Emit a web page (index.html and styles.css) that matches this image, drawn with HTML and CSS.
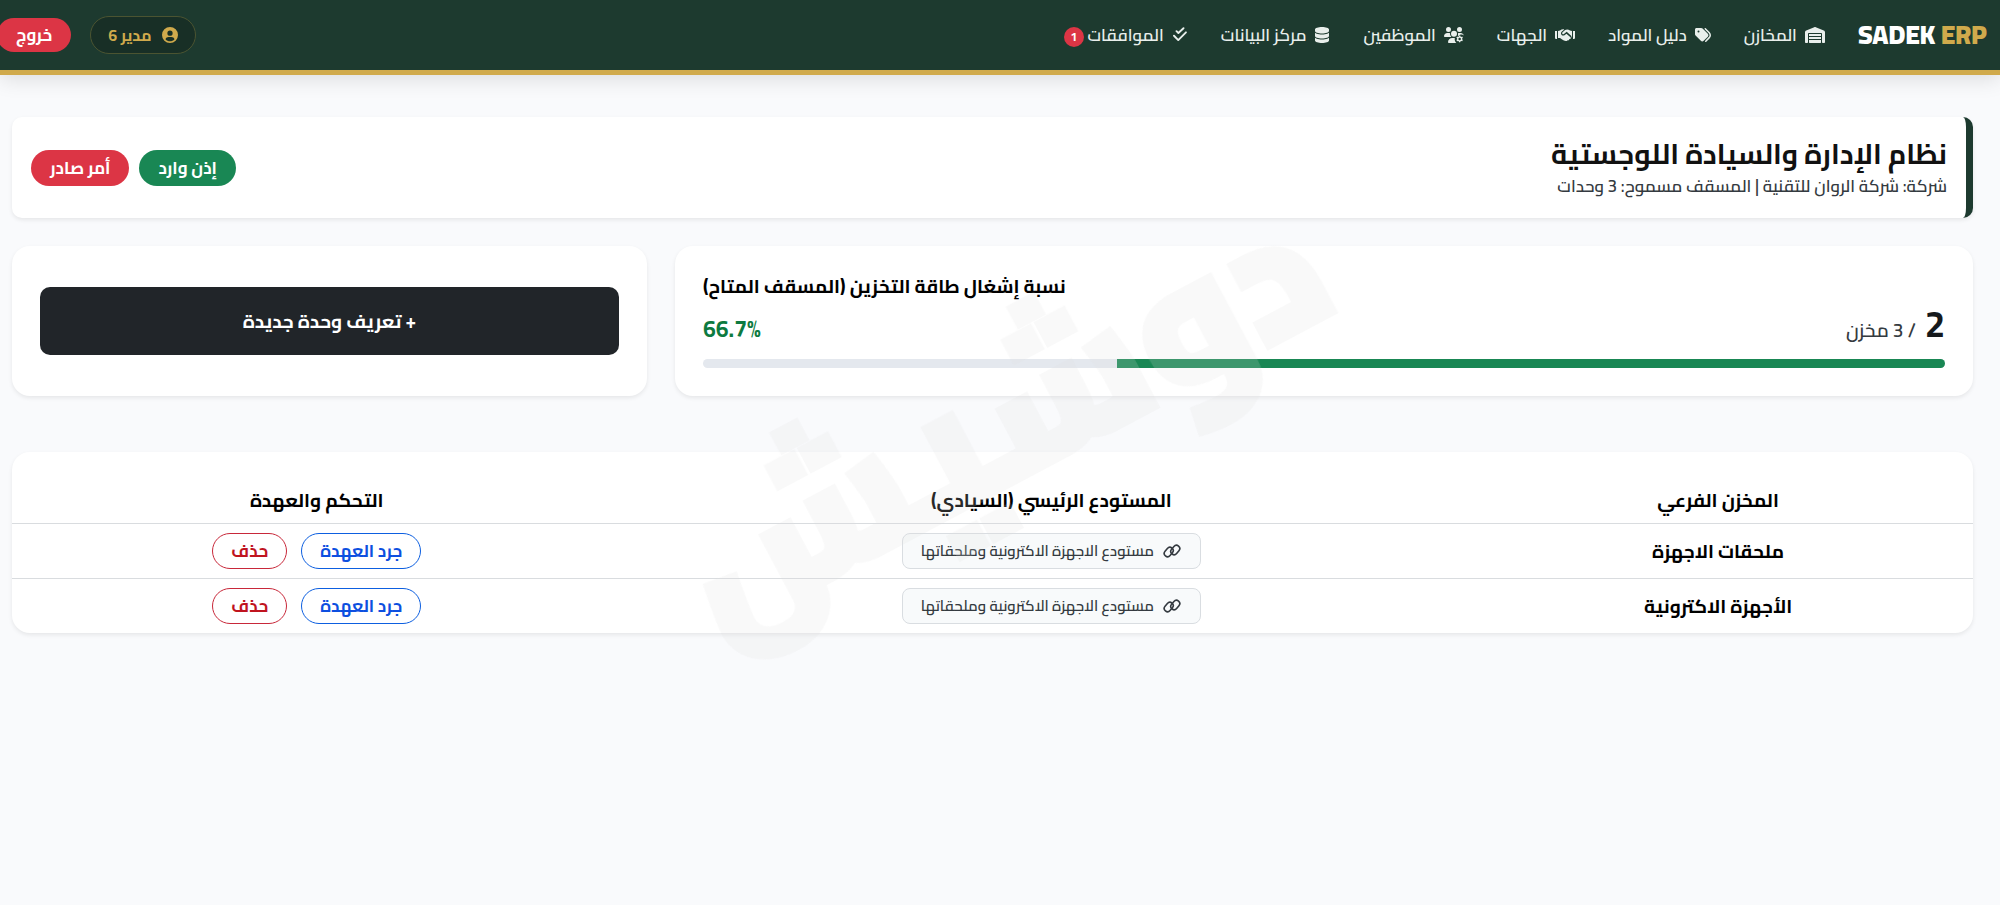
FILE: index.html
```html
<!DOCTYPE html>
<html lang="ar" dir="rtl">
<head>
  <meta charset="UTF-8">
  <meta name="viewport" content="width=device-width, initial-scale=1.0">
  <title>SADEK ERP</title>
  <link rel="stylesheet" href="styles.css">
</head>
<body>
  <svg class="sprite" aria-hidden="true">
    <symbol id="icon-warehouse" viewBox="0 0 640 512">
      <path d="M0 171V488c0 13 11 24 24 24h48c13 0 24-11 24-24V224c0-18 14-32 32-32h384c18 0 32 14 32 32v264c0 13 11 24 24 24h48c13 0 24-11 24-24V171c0-26-16-50-40-60L344 5c-15-6-32-6-48 0L40 111C16 121 0 145 0 171zM512 224H128v64h384v-64zM128 320v64h384v-64H128zM128 416v80c0 9 7 16 16 16h352c9 0 16-7 16-16v-80H128z"/>
    </symbol>
    <symbol id="icon-tags" viewBox="0 0 512 512">
      <path d="M345 39l128 129c52 52 52 136 0 188l-112 115c-9 9-25 10-34 0s-10-24 0-34l111-114c34-34 34-87 0-121L311 73c-9-9-9-25 0-34s25-10 34 0zM0 230V80c0-26 22-48 48-48h149c17 0 33 7 45 19l168 168c25 25 25 65 0 90L277 443c-25 25-65 25-90 0L19 275C7 263 0 247 0 230zm144-86a32 32 0 1 0-64 0 32 32 0 1 0 64 0z"/>
    </symbol>
    <symbol id="icon-handshake" viewBox="0 0 640 512">
      <path d="M0 128h64v256H40c-22 0-40-14-40-40V128zM576 128h64v216c0 26-18 40-40 40h-24V128z"/>
      <path d="M96 128l64-16c40-34 90-48 136-36l-76 70c-34 30-36 78-8 108 24 26 64 28 92 6l60-48 132 116c14 14 14 32 2 46-10 12-28 12-40 6 2 18-6 36-22 44-16 8-32 4-42-4-8 20-26 32-50 30-40-6-80-22-116-52L160 352H96V128z"/>
      <path d="M544 128l-64-16c-44-38-108-48-156-18l-82 74c-16 16-18 40-4 54 12 14 34 14 48 4l88-72 142 126 28 72V128z"/>
    </symbol>
    <symbol id="icon-users" viewBox="0 0 640 512">
      <path d="M144 160a80 80 0 1 0 0-160 80 80 0 1 0 0 160zM496 160a80 80 0 1 0 0-160 80 80 0 1 0 0 160zM320 312a96 96 0 1 0 0-192 96 96 0 1 0 0 192zM0 299c0-59 48-107 107-107h42c16 0 31 4 45 10a128 128 0 0 0 41 118H21c-12 0-21-9-21-21zM446 202c14-6 29-10 45-10h42c49 0 91 34 103 80-30-30-80-42-122-22-20 8-36 20-50 36l-18-4c2-28 4-54 0-80zM128 485c0-74 60-133 133-133h85c-12 60 6 120 48 160H155c-15 0-27-12-27-27z"/>
      <path fill-rule="evenodd" d="M480 272h40l8 32 22 12 32-10 22 36-24 26v24l24 26-22 36-32-10-22 12-8 34h-40l-8-34-22-12-32 10-22-36 24-26v-24l-24-26 22-36 32 10 22-12zM500 340a40 40 0 1 0 0 80 40 40 0 1 0 0-80z"/>
    </symbol>
    <symbol id="icon-database" viewBox="0 0 448 512">
      <path d="M448 80v48c0 44-100 80-224 80S0 172 0 128V80C0 36 100 0 224 0s224 36 224 80zM393 215c21-8 40-17 55-28v101c0 44-100 80-224 80S0 332 0 288V187c15 11 34 20 55 28 45 16 105 25 169 25s124-9 169-25zM0 347c15 11 34 20 55 28 45 16 105 25 169 25s124-9 169-25c21-8 40-17 55-28v85c0 44-100 80-224 80S0 476 0 432v-85z"/>
    </symbol>
    <symbol id="icon-check" viewBox="0 0 448 512">
      <path class="line" d="M112 132l60 60L336 40M32 280l136 138L414 170"/>
    </symbol>
    <symbol id="icon-user" viewBox="0 0 512 512">
      <path fill-rule="evenodd" d="M256 0a256 256 0 1 0 0 512 256 256 0 1 0 0-512zM256 112a84 84 0 1 1 0 168 84 84 0 1 1 0-168zM112 390c14-42 54-70 100-70h88c46 0 86 28 100 70-36 42-88 66-144 66s-108-24-144-66z"/>
    </symbol>
    <symbol id="icon-link" viewBox="60 36 520 440">
      <rect class="line thin" x="90" y="194" width="280" height="180" rx="90" transform="rotate(-50 230 284)"/>
      <rect class="line thin" x="270" y="138" width="280" height="180" rx="90" transform="rotate(-50 410 228)"/>
    </symbol>
  </svg>

  <header class="navbar">
    <a href="#" class="brand" dir="ltr">SADEK <span>ERP</span></a>
    <nav class="nav-menu">
      <a href="#" class="nav-item"><svg class="icon wide"><use href="#icon-warehouse"/></svg>المخازن</a>
      <a href="#" class="nav-item"><svg class="icon"><use href="#icon-tags"/></svg>دليل المواد</a>
      <a href="#" class="nav-item"><svg class="icon wide"><use href="#icon-handshake"/></svg>الجهات</a>
      <a href="#" class="nav-item"><svg class="icon wide"><use href="#icon-users"/></svg>الموظفين</a>
      <a href="#" class="nav-item"><svg class="icon"><use href="#icon-database"/></svg>مركز البيانات</a>
      <a href="#" class="nav-item"><svg class="icon"><use href="#icon-check"/></svg><span>الموافقات <span class="badge">1</span></span></a>
    </nav>
    <div class="account">
      <a href="#" class="user-chip"><svg class="icon"><use href="#icon-user"/></svg>مدير 6</a>
      <button type="button" class="btn btn-logout">خروج</button>
    </div>
  </header>

  <main class="container">
    <section class="page-head">
      <div class="head-title">
        <h1>نظام الإدارة والسيادة اللوجستية</h1>
        <p>شركة: شركة الروان للتقنية | المسقف مسموح: 3 وحدات</p>
      </div>
      <div class="head-actions">
        <button type="button" class="btn btn-success">إذن وارد</button>
        <button type="button" class="btn btn-danger">أمر صادر</button>
      </div>
    </section>

    <div class="stats">
      <section class="card usage">
        <h2>نسبة إشغال طاقة التخزين (المسقف المتاح)</h2>
        <div class="usage-row">
          <div class="usage-count"><strong>2</strong> / 3 مخزن</div>
          <span class="usage-percent" dir="ltr">66.7%</span>
        </div>
        <div class="progress"><div class="progress-bar" style="width: 66.7%"></div></div>
      </section>
      <section class="card add-card">
        <button type="button" class="btn-add">+ تعريف وحدة جديدة</button>
      </section>
    </div>

    <section class="card table-card">
      <table>
        <thead>
          <tr>
            <th>المخزن الفرعي</th>
            <th>المستودع الرئيسي (السيادي)</th>
            <th>التحكم والعهدة</th>
          </tr>
        </thead>
        <tbody>
          <tr>
            <td class="store">ملحقات الاجهزة</td>
            <td><span class="parent"><svg class="icon wide"><use href="#icon-link"/></svg>مستودع الاجهزة الاكترونية وملحقاتها</span></td>
            <td>
              <div class="row-actions">
                <button type="button" class="btn btn-outline-primary">جرد العهدة</button>
                <button type="button" class="btn btn-outline-danger">حذف</button>
              </div>
            </td>
          </tr>
          <tr>
            <td class="store">الأجهزة الاكترونية</td>
            <td><span class="parent"><svg class="icon wide"><use href="#icon-link"/></svg>مستودع الاجهزة الاكترونية وملحقاتها</span></td>
            <td>
              <div class="row-actions">
                <button type="button" class="btn btn-outline-primary">جرد العهدة</button>
                <button type="button" class="btn btn-outline-danger">حذف</button>
              </div>
            </td>
          </tr>
        </tbody>
      </table>
    </section>
  </main>

  <div class="watermark" aria-hidden="true">دوشيش</div>
</body>
</html>
```

FILE: styles.css
```css
:root {
  --primary: #1d3a2f;
  --gold: #d0aa4c;
  --success: #198754;
  --danger: #dc3545;
  --dark: #212529;
}

* {
  box-sizing: border-box;
}

body {
  margin: 0;
  min-height: 100vh;
  background: #f9fafc;
  color: #000;
  font-family: Cairo, "Noto Sans Arabic", "Noto Kufi Arabic", "Open Sans", "DejaVu Sans", sans-serif;
  font-size: 17px;
  line-height: 24px;
}

button {
  font-family: inherit;
  cursor: pointer;
}

a {
  text-decoration: none;
}

h1,
h2,
p {
  margin: 0;
}

.sprite {
  display: none;
}

.icon {
  width: 16px;
  height: 16px;
  fill: currentColor;
  flex: none;
}

.icon.wide {
  width: 20px;
}

.line {
  fill: none;
  stroke: currentColor;
  stroke-width: 60;
  stroke-linecap: round;
  stroke-linejoin: round;
}

.line.thin {
  stroke-width: 44;
}

/* header */
.navbar {
  display: flex;
  align-items: center;
  height: 75px;
  padding-right: 13px;
  background: var(--primary);
  border-bottom: 5px solid var(--gold);
  box-shadow: 0 4px 20px rgba(0, 0, 0, 0.12);
}

.brand {
  color: #fff;
  font-size: 26px;
  font-weight: 900;
}

.brand span {
  color: var(--gold);
}

.nav-menu {
  display: flex;
  gap: 33px;
  margin-right: 33px;
}

.nav-item {
  display: flex;
  align-items: center;
  gap: 8px;
  color: #e9efec;
  font-weight: 600;
  white-space: nowrap;
}

.badge {
  display: inline-block;
  width: 20px;
  height: 20px;
  border-radius: 50%;
  background: var(--danger);
  color: #fff;
  font-size: 12px;
  font-weight: 700;
  line-height: 20px;
  text-align: center;
}

.account {
  display: flex;
  align-items: center;
  gap: 19px;
  margin: 0 auto 0 -3px;
}

.user-chip {
  display: flex;
  align-items: center;
  gap: 10px;
  height: 38px;
  padding: 0 17px;
  border: 1px solid #4b5431;
  border-radius: 20px;
  background: #182f26;
  color: var(--gold);
  font-size: 16px;
  font-weight: 700;
}

.btn {
  height: 36px;
  padding: 0 18px;
  border: 1px solid transparent;
  border-radius: 18px;
  color: #fff;
  font-size: 17px;
  font-weight: 700;
  line-height: 24px;
  white-space: nowrap;
}

.btn-success {
  background: var(--success);
}

.btn-danger,
.btn-logout {
  background: var(--danger);
}

.btn-logout {
  height: 34px;
}

/* content */
.container {
  padding: 42px 27px 24px 12px;
}

.page-head {
  display: flex;
  justify-content: space-between;
  align-items: center;
  min-height: 101px;
  padding: 16px 19px;
  border-right: 7px solid var(--primary);
  border-radius: 10px;
  background: #fff;
  box-shadow: 0 2px 4px rgba(0, 0, 0, 0.08);
}

.head-title {
  padding-bottom: 4px;
}

.page-head h1 {
  color: #111;
  font-size: 28px;
  font-weight: 700;
  line-height: 40px;
}

.page-head p {
  color: #343a40;
  font-weight: 600;
}

.head-actions {
  display: flex;
  gap: 10px;
}

.stats {
  display: grid;
  grid-template-columns: minmax(0, 1298fr) minmax(0, 635fr);
  gap: 28px;
  margin: 28px 0 56px;
}

.card {
  border-radius: 18px;
  background: #fff;
  box-shadow: 0 2px 4px rgba(0, 0, 0, 0.08);
}

.usage {
  padding: 28px;
}

.usage h2 {
  font-size: 19px;
  font-weight: 700;
  line-height: 24px;
  text-align: left;
}

.usage-row {
  display: flex;
  justify-content: space-between;
  align-items: baseline;
  height: 44px;
  margin: 4px 0 13px;
  line-height: 44px;
}

.usage-count {
  color: #343a40;
  font-size: 19px;
  font-weight: 600;
}

.usage-count strong {
  margin-left: 5px;
  color: #15191c;
  font-size: 36px;
  font-weight: 700;
}

.usage-percent {
  color: #0d7a40;
  font-size: 23px;
  font-weight: 700;
}

.progress {
  height: 9px;
  border-radius: 5px;
  background: #e4e8ee;
  overflow: hidden;
}

.progress-bar {
  height: 100%;
  background: var(--success);
}

.add-card {
  display: flex;
  align-items: center;
  padding: 28px;
}

.btn-add {
  flex: 1;
  height: 68px;
  border: 0;
  border-radius: 10px;
  background: var(--dark);
  color: #fff;
  font-size: 19px;
  font-weight: 700;
}

/* table */
.table-card {
  padding-top: 25px;
}

table {
  width: 100%;
  border-collapse: collapse;
  table-layout: fixed;
}

th,
td {
  height: 55px;
  padding: 0 8px;
  font-size: 19px;
  text-align: center;
}

th {
  height: 46px;
}

th:first-child {
  width: 26%;
}

th:last-child {
  width: 32%;
}

th:last-child,
td:last-child {
  padding-right: 26px;
}

tbody tr {
  border-top: 1px solid #d9dcdf;
}

.store {
  font-weight: 700;
}

.parent {
  display: inline-flex;
  align-items: center;
  gap: 8px;
  height: 36px;
  padding: 0 18px;
  border: 1px solid #d9dde1;
  border-radius: 8px;
  background: #f8fafb;
  color: #343a40;
  font-size: 15px;
  font-weight: 600;
  vertical-align: middle;
}

.row-actions {
  display: flex;
  justify-content: center;
  gap: 14px;
}

.btn-outline-primary {
  border-color: #0d5fe0;
  background: transparent;
  color: #0d4fe0;
}

.btn-outline-danger {
  border-color: #c8283a;
  background: transparent;
  color: #c0141f;
}

/* watermark over the whole page */
.watermark {
  position: fixed;
  top: 46%;
  left: 50%;
  transform: translate(-50%, -50%) rotate(-28deg);
  color: #dedede;
  font-size: 178px;
  font-weight: 900;
  line-height: 2;
  opacity: 0.18;
  -webkit-text-stroke: 6px #dedede;
  pointer-events: none;
}
```
